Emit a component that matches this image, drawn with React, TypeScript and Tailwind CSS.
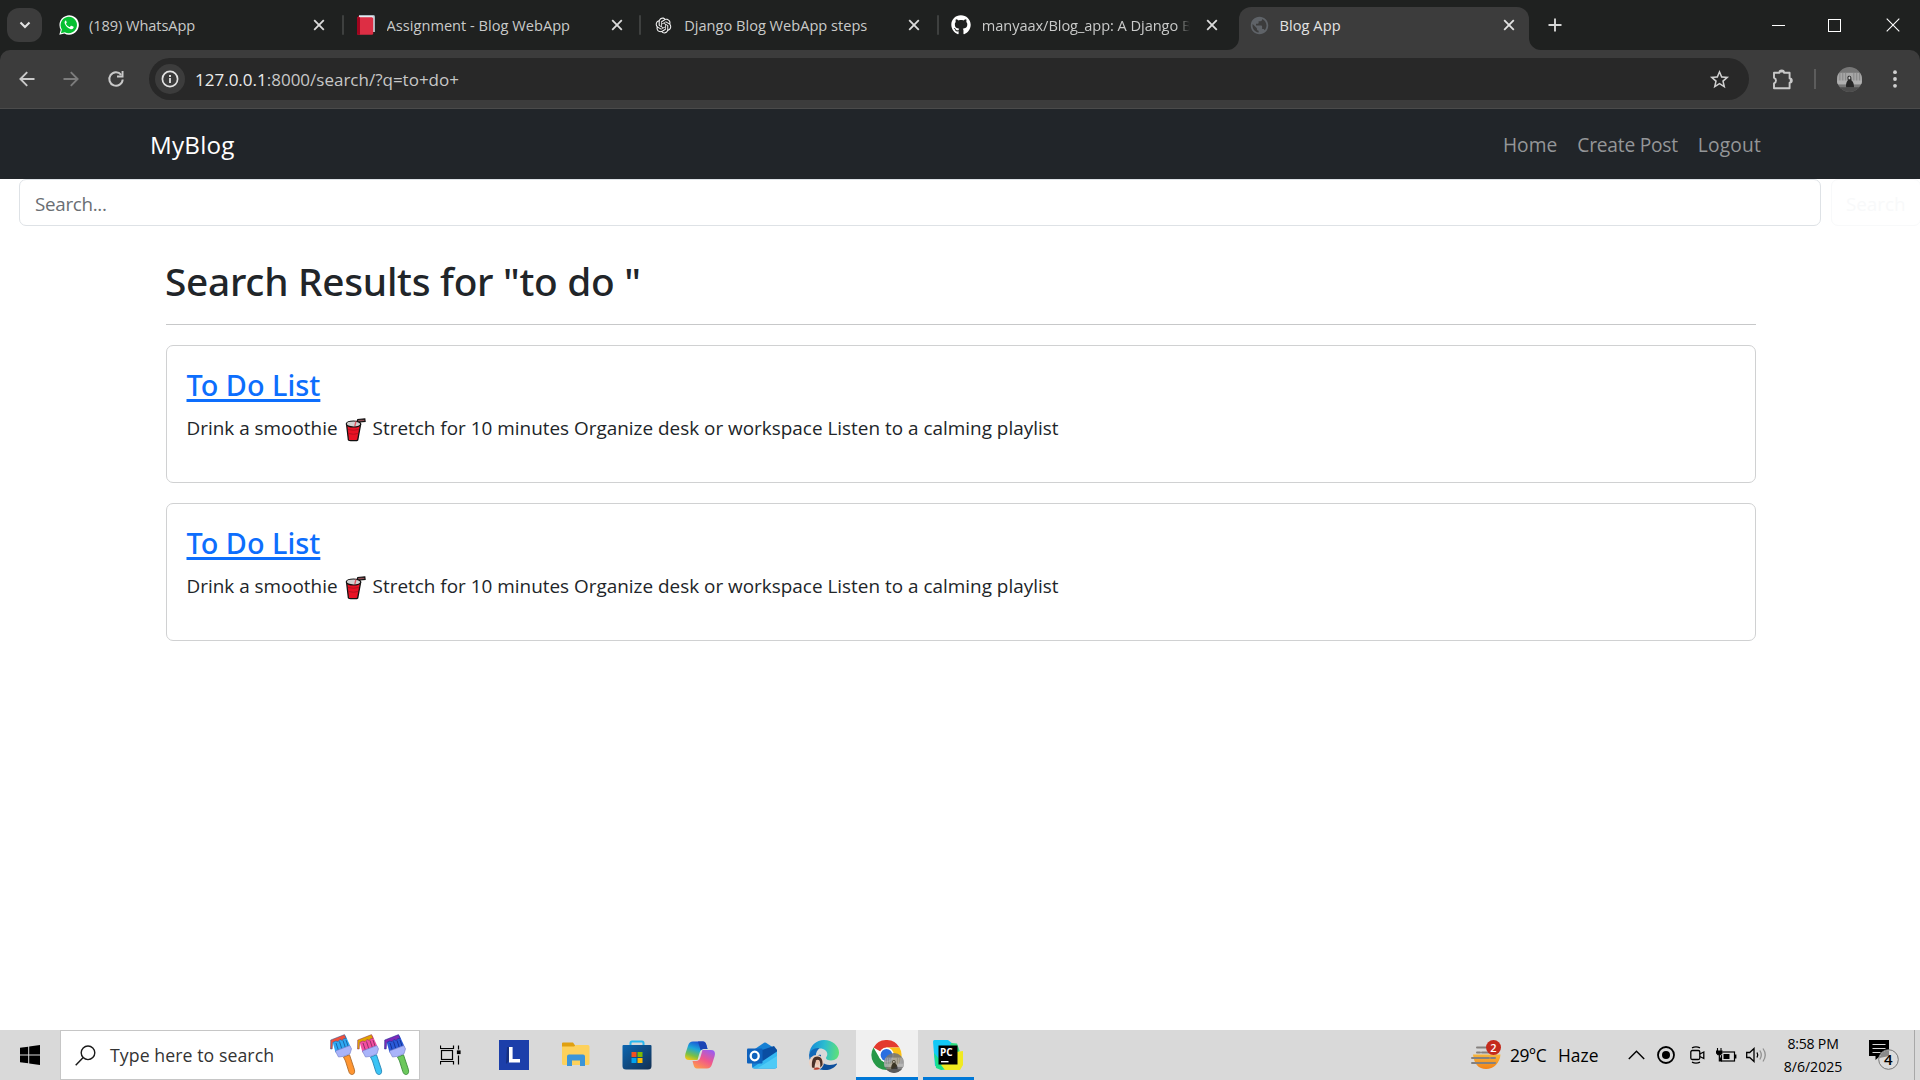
import React from 'react';
import { RiOpenaiFill } from 'react-icons/ri';
import { FaGithub } from 'react-icons/fa';
import { MdPublic, MdStarBorder } from 'react-icons/md';

const CloseGlyph = ({ className = '' }: { className?: string }) => (
  <svg width="12" height="12" viewBox="0 0 12 12" className={className}>
    <path d="M1.2 1.2l9.6 9.6M10.8 1.2L1.2 10.8" stroke="currentColor" strokeWidth="1.8" />
  </svg>
);

const WhatsAppIcon = () => (
  <svg width="20" height="20" viewBox="0 0 20 20">
    <path d="M0.3 19.8l1.4-5.1A9.7 9.7 0 1 1 5.4 18.4z" fill="#fff" />
    <path d="M1.9 18.2l1-3.7A8.2 8.2 0 1 1 5.8 17.2z" fill="#06c032" />
    <path
      d="M7.2 5.2c-.5 0-1.8.9-1.6 2.6.3 2.400 3 5.300 5.700 6.200 1.800.600 3.200-.500 3.300-1.500.1-.6 0-.7-.4-.9l-1.800-.9c-.3-.1-.5 0-.7.2l-.8 1c-.2.2-.4.2-.7.1-1.500-.7-2.500-1.700-3.200-2.900-.1-.2 0-.4.1-.6l.7-.9-.8-2c-.1-.3-.3-.4-.6-.4z"
      fill="#fff"
    />
  </svg>
);

const BookIcon = () => (
  <svg width="20" height="20" viewBox="0 0 20 20">
    <path d="M3 0h14.500A1.500 1.500 0 0 1 19 1.500V17H3z" fill="#a9b6bf" />
    <path d="M2.500 1H17.500V17H2.500z" fill="#e6e9ee" />
    <path d="M1 2.500L3 .4V18H1z" fill="#a0041e" />
    <rect x="1" y="2.200" width="16.200" height="17.600" rx="1.500" fill="#dd2e44" />
    <path d="M2.500 2.200H4v17.600H2.500A1.500 1.500 0 0 1 1 18.300V3.700a1.500 1.500 0 0 1 1.500-1.500z" fill="#a0041e" />
  </svg>
);

type TabProps = { icon: React.ReactNode; title: string; tracking: string; fade?: boolean; divider?: boolean };

const Tab = ({ icon, title, tracking, fade, divider }: TabProps) => (
  <div className="flex h-[50px] w-[297.600px] shrink-0 items-center pl-[12px]">
    <div className="flex w-[22px] shrink-0 justify-center pr-[1px]">{icon}</div>
    <div
      className={
        'ml-[9px] w-[209px] overflow-hidden text-[14.600px] leading-[24px] whitespace-nowrap text-[#c9cac9] ' +
        tracking +
        (fade ? ' [mask-image:linear-gradient(to_right,black_194px,transparent_208px)]' : '')
      }
    >
      {title}
    </div>
    <div className="ml-[10px] flex w-[22px] shrink-0 justify-center text-[#dcdcdc]">
      <CloseGlyph />
    </div>
    {divider && <div className="ml-auto h-[20px] w-[2px] rounded bg-[#3e403f]" />}
  </div>
);

const TabStrip = () => (
  <div className="flex h-[50px] items-center bg-[#1f2120]">
    <div className="ml-[7px] flex h-[34px] w-[35px] shrink-0 items-center justify-center rounded-[12px] bg-[#3c3c3c]">
      <svg width="12" height="8" viewBox="0 0 12 8">
        <path d="M1.500 1.500L6 6l4.500-4.500" fill="none" stroke="#e3e3e3" strokeWidth="2.100" />
      </svg>
    </div>
    <div className="ml-[4px] flex">
      <Tab icon={<WhatsAppIcon />} title="(189) WhatsApp" tracking="tracking-[-0.005em]" divider />
      <Tab icon={<BookIcon />} title="Assignment - Blog WebApp" tracking="tracking-[0.001em]" divider />
      <Tab icon={<RiOpenaiFill size={19} color="#f2f2f2" />} title="Django Blog WebApp steps" tracking="tracking-normal" divider />
      <Tab icon={<FaGithub size={20} color="#fff" />} title="manyaax/Blog_app: A Django B" tracking="tracking-[-0.004em]" fade />
    </div>
    <div className="relative ml-[3px] flex h-[43px] w-[290px] shrink-0 items-center self-end rounded-t-[12px] bg-[#3c3c3c] pb-[7px] pl-[10px]">
      <svg width="12" height="12" viewBox="0 0 12 12" className="absolute bottom-0 -left-[12px]">
        <path d="M12 0V12H0A12 12 0 0 0 12 0z" fill="#3c3c3c" />
      </svg>
      <svg width="12" height="12" viewBox="0 0 12 12" className="absolute -right-[12px] bottom-0">
        <path d="M0 0V12H12A12 12 0 0 1 0 0z" fill="#3c3c3c" />
      </svg>
      <MdPublic size={21} color="#5f6368" />
      <div className="ml-[9px] w-[209px] text-[14.600px] leading-[24px] tracking-[0.005em] text-[#e3e3e3]">Blog App</div>
      <div className="ml-[10px] flex w-[22px] justify-center text-[#e3e3e3]">
        <CloseGlyph />
      </div>
    </div>
    <svg width="14" height="14" viewBox="0 0 14 14" className="ml-[19px]">
      <path d="M7 .5v13M.5 7h13" stroke="#d5d6d5" strokeWidth="1.900" />
    </svg>
    <div className="ml-auto flex items-center pr-[20px]">
      <svg width="13" height="14" viewBox="0 0 13 14" shapeRendering="crispEdges">
        <path d="M0 7.500h13" stroke="#fff" />
      </svg>
      <svg width="13" height="14" viewBox="0 0 13 14" className="ml-[43px]" shapeRendering="crispEdges">
        <rect x=".5" y="1.500" width="12" height="12" fill="none" stroke="#fff" />
      </svg>
      <svg width="14" height="14" viewBox="0 0 14 14" className="ml-[45px]">
        <path d="M.7 .7l12.600 12.600M13.300.7L.7 13.300" stroke="#fff" strokeWidth="1.100" />
      </svg>
    </div>
  </div>
);

const ProfilePhoto = ({ size }: { size: number }) => (
  <svg width={size} height={size} viewBox="0 0 26 26" className="rounded-full">
    <rect width="26" height="26" fill="#777" />
    <rect y="6" width="26" height="12" fill="#a6a6a6" />
    <path d="M3 6v12M6 6v12M9 6v12M17.500 6v12M20.500 6v12M23.500 6v12" stroke="#868686" strokeWidth="1" />
    <path d="M0 14h26v4H0z" fill="#b0b0b0" />
    <path d="M0 21h26v5H0z" fill="#4c4c4c" />
    <path d="M9.500 21c-.5-3.500.5-6 1.700-7l-.4-3c0-2.600 3.800-2.600 4.100 0l.2 3c1.700 1 2.600 3.500 2.600 7z" fill="#262626" />
    <path d="M12 10.800c0-1.300 1.800-1.300 1.800 0v2H12z" fill="#c9c9c9" />
  </svg>
);

const Toolbar = () => (
  <div className="bg-[#1f2120]">
    <div className="flex h-[59px] items-center rounded-t-[10px] border-b border-[#4b4b4b] bg-[#3c3c3c]">
      <svg width="16" height="16" viewBox="0 0 16 16" className="ml-[19px]">
        <path d="M15.500 8H1.500M8.200 1.200L1.400 8l6.800 6.800" fill="none" stroke="#c9c9c9" strokeWidth="1.900" />
      </svg>
      <svg width="16" height="16" viewBox="0 0 16 16" className="ml-[28px]">
        <path d="M.5 8h14M7.800 1.200L14.600 8l-6.800 6.800" fill="none" stroke="#7c7c7c" strokeWidth="1.900" />
      </svg>
      <svg width="18" height="18" viewBox="0 0 18 18" className="ml-[28px]">
        <path d="M15.700 9.500A6.700 6.700 0 1 1 14.200 4.800" fill="none" stroke="#c9c9c9" strokeWidth="2" />
        <path d="M16.500 1v6.500H10V5.600h4.600V1z" fill="#c9c9c9" />
      </svg>
      <div className="ml-[24px] flex h-[42px] w-[1600px] items-center rounded-full bg-[#282828] pl-[6px]">
        <div className="flex size-[30px] items-center justify-center rounded-full bg-[#3c3c3c]">
          <svg width="18" height="18" viewBox="0 0 18 18">
            <circle cx="9" cy="9" r="7.600" fill="none" stroke="#e3e3e3" strokeWidth="1.700" />
            <path d="M9 8v5" stroke="#e3e3e3" strokeWidth="1.800" />
            <path d="M9 5v1.900" stroke="#e3e3e3" strokeWidth="1.900" />
          </svg>
        </div>
        <div className="ml-[10px] pt-[2px] text-[17px] leading-[24px] text-[#c7c7c7]">
          <span className="text-[#ececec]">127.0.0.1</span>:8000/search/?q=to+do+
        </div>
        <MdStarBorder size={23} color="#d0d0d0" className="mr-[18px] ml-auto" />
      </div>
      <svg width="22" height="22" viewBox="0 0 22 22" className="ml-[23px]">
        <path
          d="M2 4.800h5.400a2.300 2.300 0 0 1 4.600 0h5.600v5.600a2.200 2.200 0 0 1 0 4.400v5.400H2v-4.900a2.900 2.900 0 0 0 0-5.500z"
          fill="none"
          stroke="#c9c9c9"
          strokeWidth="1.900"
          strokeLinejoin="round"
        />
        <path d="M7.500 4.500a2.200 2.200 0 0 1 4.400 0zM17.800 10.300a2.200 2.200 0 0 1 0 4.400z" fill="#c9c9c9" />
      </svg>
      <div className="ml-[20px] h-[20px] w-[2px] bg-[#5c5c5c]" />
      <div className="ml-[21px]">
        <ProfilePhoto size={25} />
      </div>
      <svg width="4" height="18" viewBox="0 0 4 18" className="ml-[31px]">
        <circle cx="2" cy="2.200" r="1.900" fill="#d0d0d0" />
        <circle cx="2" cy="9" r="1.900" fill="#d0d0d0" />
        <circle cx="2" cy="15.800" r="1.900" fill="#d0d0d0" />
      </svg>
    </div>
  </div>
);

const Cup = () => (
  <svg width="21" height="24" viewBox="0 0 21 24" className="-my-1 mr-[7px] ml-[7px] inline-block align-[-3px]">
    <path d="M11.500 5.500L12.800 1.500l7-.7.300 2.600-5.400.6-.6 2.500z" fill="#8f4f54" stroke="#111" strokeWidth="1.200" />
    <path d="M1.600 6.500L3.400 22c.1.900 9.100.9 9.300 0L15.600 6.500z" fill="#e81224" stroke="#111" strokeWidth="1.300" />
    <ellipse cx="8.500" cy="6" rx="7.200" ry="3" fill="#d2d2d2" stroke="#111" strokeWidth="1.200" />
    <path d="M9.800 8l1.200-4.500" stroke="#e0525c" strokeWidth="1.300" />
    <path d="M3.200 11.500q5 1.500 10.600 0M3.600 15.500q5 1.500 9.500 0" stroke="#b00e1c" strokeWidth=".9" fill="none" />
  </svg>
);

const ResultCard = () => (
  <div className="mb-[20px] h-[138px] rounded-[7px] border border-[#d0d1d2] px-[19.500px] pt-[20px]">
    <h4 className="text-[28.800px] leading-[38px] font-medium font-['Noto_Sans',sans-serif] tracking-[0.001em] text-[#0d6efd]">
      <a className="underline decoration-[3px] underline-offset-[3px]">To Do List</a>
    </h4>
    <p className="mt-[9px] text-[18.900px] leading-[30px] tracking-[0.0005em] whitespace-nowrap text-[#212529]">
      Drink a smoothie
      <Cup />
      Stretch for 10 minutes Organize desk or workspace Listen to a calming playlist
    </p>
  </div>
);

const Page = () => (
  <main className="flex-1 overflow-hidden bg-white">
    <nav className="flex h-[70px] items-center bg-[#212529] pt-[2px] pr-[159px] pl-[150px]">
      <div className="text-[24.200px] leading-[36px] tracking-[0.010em] text-white">MyBlog</div>
      <div className="ml-auto flex gap-[20px] text-[19.200px] leading-[30px] text-[#949698]">
        <a className="tracking-[0.002em]">Home</a>
        <a className="tracking-[-0.012em]">Create Post</a>
        <a className="tracking-[0.009em]">Logout</a>
      </div>
    </nav>
    <form className="flex h-[47px] w-[1930px] pl-[19px] text-[18.800px] leading-[30px]">
      <div className="flex w-[1802px] items-center rounded-[7px] border border-[#dee2e6] pt-[2px] pl-[15px] tracking-[-0.016em] text-[#6a6e73]">
        Search...
      </div>
      <div className="ml-[10px] flex w-[90px] items-center rounded-[7px] border border-[#f8f9fa] pt-[2px] pl-[14px] text-[#f8f9fa]">
        Search
      </div>
    </form>
    <section className="mx-auto ml-[166px] w-[1590px]">
      <h2 className="-ml-px pt-[31px] text-[38.800px] leading-[48px] font-medium font-['Noto_Sans',sans-serif] tracking-[-0.007em] whitespace-pre text-[#212529]">
        {'Search Results for "to do "'}
      </h2>
      <hr className="mt-[19px] mb-[20px] border-t border-[#c7c8c9]" />
      <ResultCard />
      <ResultCard />
    </section>
  </main>
);

const Brush = ({ paint, dark, drip, handle, shade }: Record<'paint' | 'dark' | 'drip' | 'handle' | 'shade', string>) => (
  <svg width="26" height="42" viewBox="0 0 26 42">
    <path d="M13.500 23l6-2.200 4.800 14.400c.9 2.700 0 5-1.800 5.300-1.700.3-3.100-.9-3.700-2.900L15.500 27z" fill={handle} stroke={shade} strokeWidth=".9" />
    <path d="M2.200 6.500L15.500 1.500l5 11L5.500 18.500z" fill={paint} />
    <path d="M6 9l2.500 7.500M9.500 7.500l2.500 8M13 6.500l2.500 7.500M16 6l2 6" stroke={dark} strokeWidth=".9" />
    <path d="M.5 15L.7 6 14.500.6l1.700 4.200-2.400-.3-1.500 1.900-2.400-.9-1.700 2-2.600-.4-2.900 1.400L2.200 15z" fill={drip} stroke={dark} strokeWidth=".5" />
    <path d="M5.300 17l14.500-5.400 1.700 3.200-1.500 5-6 2.500-5.500.7z" fill="#a9b4fa" stroke="#6f78c8" strokeWidth=".6" />
  </svg>
);

const Slot = ({ children, className = '' }: { children: React.ReactNode; className?: string }) => (
  <div className={'relative flex h-[50px] w-[62px] shrink-0 items-center justify-center ' + className}>{children}</div>
);

const FolderIcon = () => (
  <svg width="30" height="26" viewBox="0 0 30 26">
    <path d="M1 1.500Q1 .5 2 .5h10l2.500 3.500H28V12H1z" fill="#e0a010" />
    <path d="M1 4.500h12l2-1.500h12q1.500 0 1.500 1.500v17q0 1.500-1.500 1.500H2.500Q1 23 1 21.500z" fill="#fdd15c" />
    <path d="M6 24V14.500Q6 12.500 8 12.500h14q2 0 2 2V24h-5v-5.500h-8V24z" fill="#3b95d9" />
  </svg>
);

const StoreIcon = () => (
  <svg width="30" height="30" viewBox="0 0 30 30">
    <defs>
      <linearGradient id="store" x1="0" y1="0" x2="1" y2="1">
        <stop offset="0" stopColor="#0b66b2" />
        <stop offset="1" stopColor="#153052" />
      </linearGradient>
    </defs>
    <path d="M8.500 7V3Q8.500 1.500 10 1.500h10q1.500 0 1.500 1.500v4" fill="none" stroke="#29b8f0" strokeWidth="2" />
    <path d="M.5 6Q.5 5 1.500 5h27q1 0 1 1v20q0 3.500-3.500 3.500H4Q.5 29.500.5 26z" fill="url(#store)" />
    <rect x="9.500" y="12" width="5" height="5" fill="#f25022" />
    <rect x="15.500" y="12" width="5" height="5" fill="#7fba00" />
    <rect x="9.500" y="18" width="5" height="5" fill="#00a4ef" />
    <rect x="15.500" y="18" width="5" height="5" fill="#ffb900" />
  </svg>
);

const CopilotIcon = () => (
  <svg width="30" height="28" viewBox="0 0 30 28">
    <defs>
      <linearGradient id="cpa" x1=".6" y1="0" x2=".2" y2="1">
        <stop offset="0" stopColor="#1a4fd6" />
        <stop offset=".4" stopColor="#1ca8d8" />
        <stop offset=".75" stopColor="#7bc043" />
        <stop offset="1" stopColor="#f3c614" />
      </linearGradient>
      <linearGradient id="cpb" x1=".8" y1="0" x2=".2" y2="1">
        <stop offset="0" stopColor="#9a5cf0" />
        <stop offset=".5" stopColor="#f0578c" />
        <stop offset="1" stopColor="#ff9a4a" />
      </linearGradient>
    </defs>
    <path d="M8 .5h10c2 0 2.800 1.500 3.400 3.500L22.500 8H19c-2.500 0-3.600 1.200-4.300 3.500L12.500 19H4C0 19-.5 16 .5 12.500l2.600-8C3.900 2 5.500.5 8 .5z" fill="url(#cpa)" />
    <path d="M22 27.500H12c-2 0-2.800-1.500-3.400-3.500L7.500 20H11c2.500 0 3.600-1.200 4.300-3.500L17.500 9H26c4 0 4.500 3 3.500 6.500l-2.600 8C26.100 26 24.500 27.500 22 27.500z" fill="url(#cpb)" />
    <path d="M13 .5h5c2 0 2.800 1.500 3.400 3.500L22.500 8H19c-1.500 0-2.600.5-3.300 1.500z" fill="#1b45b4" />
  </svg>
);

const OutlookIcon = () => (
  <svg width="30" height="27" viewBox="0 0 30 27">
    <path d="M5 9L17 .8Q18 .3 19 .8L30 8v16q0 2.500-2.500 2.500h-20Q5 26.500 5 24z" fill="#1680d4" />
    <path d="M12 9L27 4l3 4v5L16 20z" fill="#0a4ea2" />
    <path d="M5 26l25-16.500V24q0 2.500-2.500 2.500h-20z" fill="#35b8f1" />
    <path d="M10 26.500L30 14v10q0 2.500-2.500 2.500z" fill="#5fd6fa" opacity=".6" />
    <rect x="0" y="6.500" width="15.500" height="15" rx="1" fill="#0f62bd" />
    <ellipse cx="7.700" cy="14" rx="4" ry="4.300" fill="none" stroke="#fff" strokeWidth="2.300" />
  </svg>
);

const EdgeIcon = () => (
  <svg width="30" height="30" viewBox="0 0 30 30">
    <defs>
      <linearGradient id="edge" x1="0" y1=".3" x2="1" y2=".4">
        <stop offset="0" stopColor="#1689d8" />
        <stop offset=".5" stopColor="#2bbcd0" />
        <stop offset="1" stopColor="#5ee07a" />
      </linearGradient>
    </defs>
    <path d="M.2 14C1 5.500 7.500 0 15 0c8.500 0 15 6 15 12.500 0 5-3.500 8-8 8-3 0-5-1-5-2.500 0-1 1.300-1.500 1.300-4 0-3-3-5.500-7.300-5.500C5.500 8.500 1.500 11 .2 14z" fill="url(#edge)" />
    <path d="M.2 14C2 9.500 6 7.500 10.500 8.200c-2.500 2-4 5-3.600 9 .5 6 5 11 11.100 12.500C8.500 31.500-1 25 .2 14z" fill="#1268b8" />
    <path d="M12 15c-1.500 6 3 10 8.500 10 3.500 0 5.500-1 7-1.500.5 0 .7.300.5.700C25.500 28 21 30 16.500 30 12 30 8 25 8 20s2-5.500 4-5z" fill="#0d4f9c" />
    <circle cx="7.500" cy="22.500" r="7.500" fill="#ecd2c4" />
    <path d="M3 27.500C2.500 21 3.500 16.500 8.500 16.500c4 0 5.500 4 5 8.500l-2 2.500c-.5 0 .5-5-1.500-7.500-3.500 0-4 3.500-4.500 8z" fill="#4a3028" />
    <path d="M6.800 20.500q2-1.300 3.200 0 .8 3-1 4.800-2.400-.8-2.200-4.800z" fill="#edc3ab" />
    <path d="M4.500 29.300c1-2 5-2.500 6.500-.5-2 1.200-4.500 1.400-6.500.5z" fill="#b9402f" />
  </svg>
);

const ChromeIcon = () => (
  <svg width="32" height="32" viewBox="0 0 32 32">
    <circle cx="15.500" cy="15" r="15" fill="#fff" />
    <path d="M15.500 15L2.500 7.500A15 15 0 0 1 28.500 7.500H15.500z" fill="#e33b2e" />
    <path d="M15.500 7.500H28.500A15 15 0 0 1 15.500 30l6.500-11.300z" fill="#fbc116" />
    <path d="M2.500 7.500A15 15 0 0 0 15.500 30l6.500-11.300h-13z" fill="#279847" />
    <circle cx="15.500" cy="15" r="7.400" fill="#fff" />
    <circle cx="15.500" cy="15" r="5.900" fill="#2a6fe0" />
  </svg>
);

const PyCharmIcon = () => (
  <div className="relative size-[30px]">
    <svg width="30" height="30" viewBox="0 0 30 30" className="block">
      <path d="M0 1.500Q0 0 1.500 0H15l5 4-2 22H2z" fill="#12c8f5" />
      <path d="M1 13l7 8 10 8-10 1-5-2z" fill="#1be08a" />
      <path d="M18 3l6 .5 2.500 7-3 12L14 12z" fill="#2fe07f" />
      <path d="M23 12l7-1v14l-3 5H12l-4-5z" fill="#f0ea20" />
      <rect x="5.500" y="5.500" width="19" height="19" fill="#000" />
      <rect x="8" y="21" width="7.500" height="1.400" fill="#fff" />
    </svg>
    <span className="absolute top-[6px] left-[7px] text-[10px] leading-[12px] font-bold text-white">PC</span>
  </div>
);

const WeatherIcon = () => (
  <div className="relative size-[30px]">
    <svg width="30" height="30" viewBox="0 0 30 30" className="block">
      <defs>
        <linearGradient id="sun" x1="0" y1="0" x2="0" y2="1">
          <stop offset="0" stopColor="#f7b63c" />
          <stop offset="1" stopColor="#f58216" />
        </linearGradient>
      </defs>
      <path d="M2 14.500H29.500C29 23 22.500 29 15 29S3 24 2 14.500z" fill="url(#sun)" />
      <path d="M6 7.500h9M6 12.500h3M11 12.500h12M1 18h17M20 18h4M1 23h23" stroke="#85817f" strokeWidth="2" strokeLinecap="round" />
    </svg>
    <span className="absolute top-0 right-0 flex size-[15px] items-center justify-center rounded-full bg-[#c42b1c] text-[11px] leading-none font-semibold text-white">
      2
    </span>
  </div>
);

const Taskbar = () => (
  <footer className="flex h-[50px] shrink-0 items-center bg-[#d9d9d9] text-black">
    <div className="flex w-[60px] justify-center">
      <svg width="20" height="20" viewBox="0 0 20 20">
        <path d="M0 2.800L8.200 1.700V9.500H0zM9.200 1.500L20 0v9.500H9.200zM0 10.500h8.200v7.800L0 17.200zM9.200 10.500H20V20L9.200 18.500z" />
      </svg>
    </div>
    <div className="flex h-[50px] w-[360px] items-center border border-[#c6c6c6] bg-white">
      <svg width="21" height="21" viewBox="0 0 21 21" className="ml-[14px]">
        <circle cx="13" cy="7.800" r="6.800" fill="none" stroke="#1a1a1a" strokeWidth="1.400" />
        <path d="M8.200 12.600L.7 20.300" stroke="#1a1a1a" strokeWidth="1.500" />
      </svg>
      <div className="ml-[14px] text-[17.700px] leading-[24px] tracking-[0.004em] text-[#333]">Type here to search</div>
      <div className="mr-[9px] ml-auto flex gap-[1px]">
        <Brush paint="#2ea8f2" dark="#1a5fa0" drip="#f0503c" handle="#ff9632" shade="#b06a28" />
        <Brush paint="#f24fa0" dark="#8a2a62" drip="#e0a400" handle="#3cc4f5" shade="#2484b4" />
        <Brush paint="#2a5ad8" dark="#122f90" drip="#7d2ab8" handle="#6cc85c" shade="#3c8c3c" />
      </div>
    </div>
    <div className="flex w-[63px] justify-center pr-[3px]">
      <svg width="21" height="20" viewBox="0 0 21 20" fill="none" stroke="#000" strokeWidth="1.200">
        <rect x="1.500" y="5.500" width="11" height="9" />
        <path d="M.5 .5v3h13v-3M.5 19.500v-3h13v3M18.500 .5v4M18.500 10.500v9" />
        <rect x="17.500" y="6" width="2.500" height="2.500" fill="#000" />
      </svg>
    </div>
    <Slot>
      <div className="flex size-[30px] items-center justify-center bg-[#1c3faa]">
        <svg width="16" height="20" viewBox="0 0 16 20">
          <path d="M1 2h2v14l-3 3z" fill="#163080" />
          <path d="M3 2h3.600v12H14v3.500H3z" fill="#fff" />
        </svg>
      </div>
    </Slot>
    <Slot><FolderIcon /></Slot>
    <Slot className="pr-[2px]"><StoreIcon /></Slot>
    <Slot><CopilotIcon /></Slot>
    <Slot><OutlookIcon /></Slot>
    <Slot><EdgeIcon /></Slot>
    <Slot className="left-px border-b-[3px] border-[#0078d7] bg-[#f0f0f0]">
      <div className="relative mt-[4px]">
        <ChromeIcon />
        <div className="absolute -right-[1px] -bottom-[1px] opacity-90">
          <ProfilePhoto size={20} />
        </div>
      </div>
    </Slot>
    <Slot>
      <PyCharmIcon />
      <div className="absolute bottom-0 left-[6px] h-[3px] w-[51px] bg-[#0078d7]" />
    </Slot>
    <div className="ml-auto flex h-[50px] items-center">
      <WeatherIcon />
      <div className="ml-[9px] w-[48px] text-[17.400px] leading-[24px] tracking-[-0.030em]">29°C</div>
      <div className="w-[70px] text-[17.400px] leading-[24px] tracking-normal">Haze</div>
      <svg width="17" height="10" viewBox="0 0 17 10">
        <path d="M.8 9l7.700-7.700L16.200 9" fill="none" stroke="#000" strokeWidth="1.400" />
      </svg>
      <svg width="18" height="18" viewBox="0 0 18 18" className="ml-[12px]">
        <circle cx="9" cy="9" r="8" fill="none" stroke="#000" strokeWidth="1.800" />
        <circle cx="9" cy="9" r="4" />
      </svg>
      <svg width="15" height="18" viewBox="0 0 15 18" className="ml-[15px]" fill="none" stroke="#000" strokeWidth="1.300">
        <rect x=".8" y="4.500" width="9" height="9" rx="1.500" />
        <path d="M9.800 8l4-2v6.500l-4-2M2 1.800Q6-.2 10 1.800M2 16.200q4 2 8 0" />
      </svg>
      <svg width="21" height="15" viewBox="0 0 21 15" className="ml-[11px]">
        <rect x="5.500" y="4" width="13" height="9" fill="none" stroke="#000" strokeWidth="1.200" />
        <rect x="7.500" y="6" width="6" height="5" />
        <path d="M19 6.500h1.400v4H19z" />
        <path d="M0 2.500h6.500V6L4.500 8v5h-2V8L0 6z" fill="#d9d9d9" />
        <path d="M1.500 0v3M5 0v3M.5 3h5.500v2L4.500 6.800H2L.5 5zM3.300 6.500V13H6" fill="#000" stroke="#000" strokeWidth="1.100" />
      </svg>
      <svg width="21" height="16" viewBox="0 0 21 16" className="ml-[9px]" fill="none" strokeWidth="1.300">
        <path d="M.7 5.500h3L8 1.500v13l-4.300-4h-3z" stroke="#000" />
        <path d="M11 5.500q1.500 2.500 0 5" stroke="#000" />
        <path d="M13.800 3.500q3 4.500 0 9M17 1.500q4.500 6.500 0 13" stroke="#909090" />
      </svg>
      <div className="ml-[10px] flex w-[72px] flex-col items-center text-[14.100px] leading-[23px]">
        <div className="tracking-[-0.015em]">8:58 PM</div>
        <div>8/6/2025</div>
      </div>
      <div className="relative ml-[20px] h-[30px] w-[30px]">
        <svg width="30" height="30" viewBox="0 0 30 30">
          <path d="M0 0h20v16H11l-4.500 4v-4H0z" />
          <path d="M3.500 4.500h13M3.500 8.500h13M3.500 12.500h8" stroke="#d9d9d9" strokeWidth="1.200" />
          <circle cx="19.500" cy="19.500" r="9.800" fill="#dcdcdc" stroke="#777" strokeWidth="1" />
          <path d="M10.500 17.500A9.300 9.300 0 0 1 20 10.200V16l-9.500 2z" fill="#8a8a8a" />
        </svg>
        <span className="absolute top-[10px] left-[15px] text-[15px] leading-[19px] font-semibold">4</span>
      </div>
      <div className="mr-[5px] ml-[15px] h-[50px] w-px bg-[#a8a8a8]" />
    </div>
  </footer>
);

export default function App() {
  return (
    <div className="flex h-[1080px] w-[1920px] flex-col overflow-hidden bg-white font-['Open_Sans','Noto_Sans',sans-serif]">
      <TabStrip />
      <Toolbar />
      <Page />
      <Taskbar />
    </div>
  );
}
